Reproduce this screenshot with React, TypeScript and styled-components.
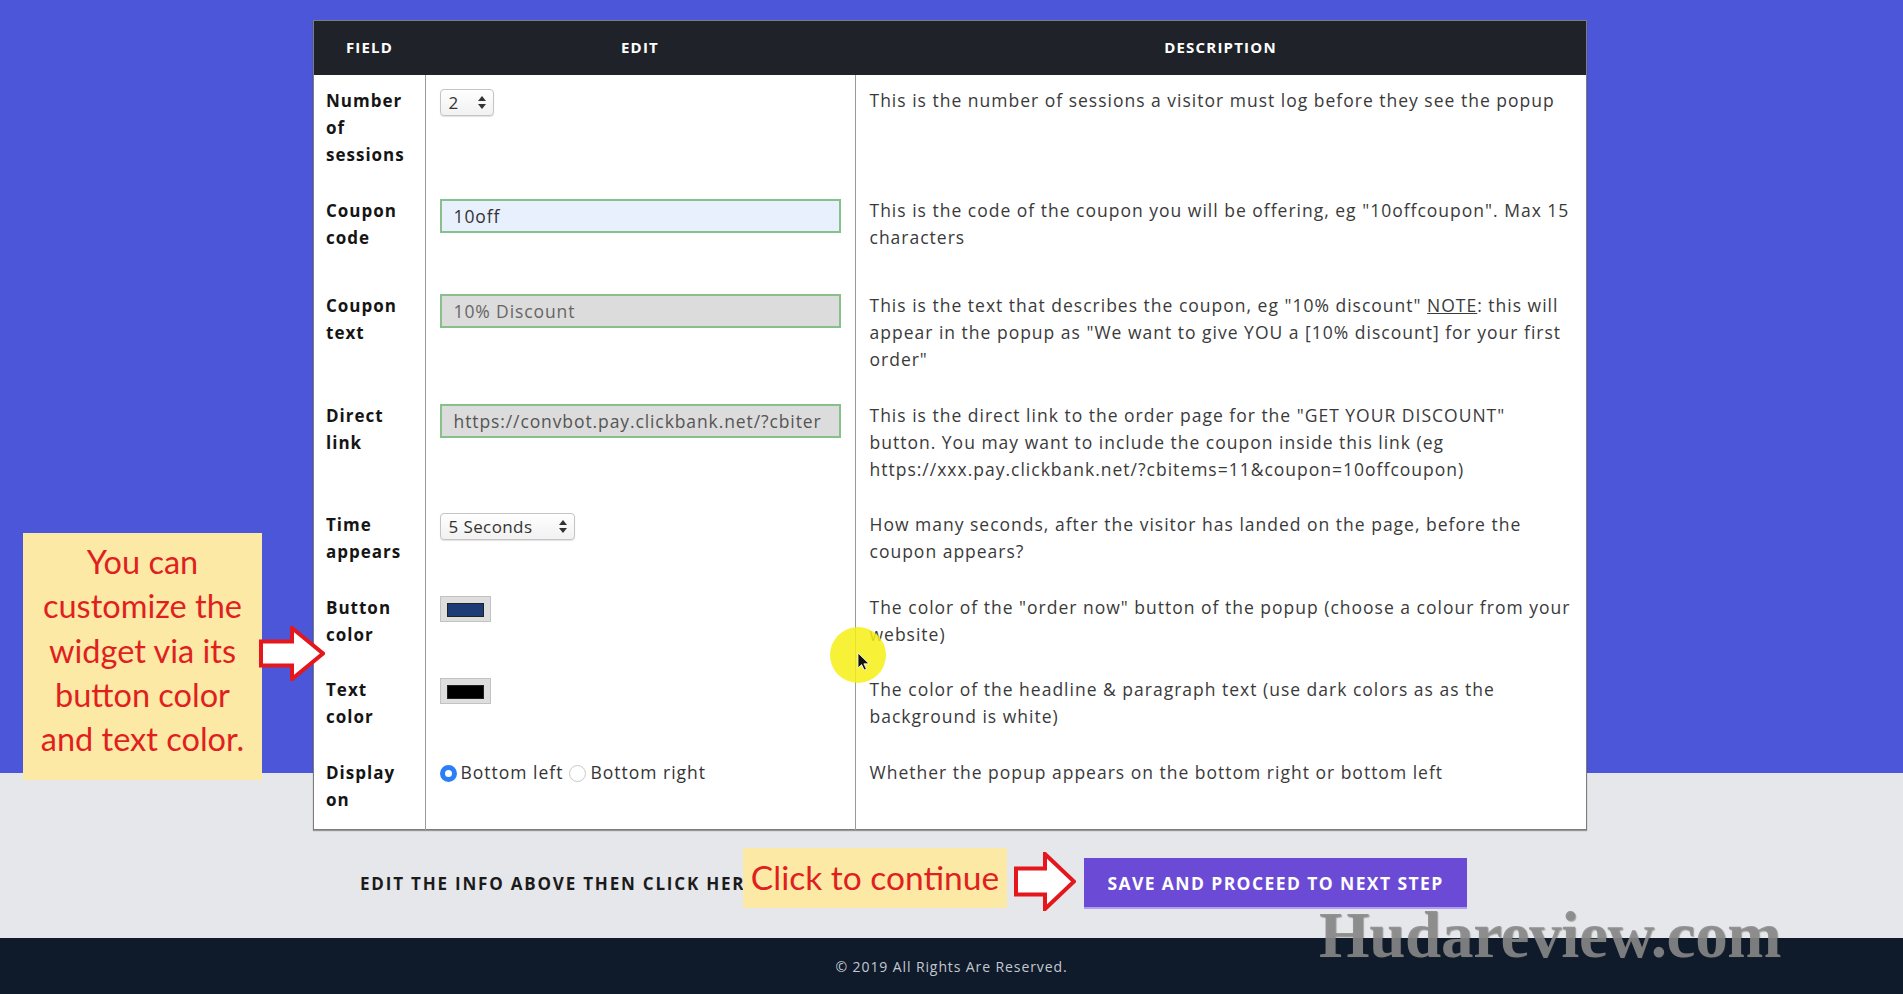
import React from "react";
import styled, { createGlobalStyle } from "styled-components";

const GlobalStyle = createGlobalStyle`
  html, body {
    margin: 0;
    padding: 0;
  }
  body {
    font-family: "Open Sans", "Liberation Sans", sans-serif;
    color: #333;
    background: #e6e7eb;
  }
`;

const Page = styled.div`
  position: relative;
  width: 1903px;
  min-height: 994px;
  overflow: hidden;
`;

const Main = styled.section`
  padding: 20px 0 0 313px;
  background: linear-gradient(to bottom, #4b57d8 0, #4b57d8 773px, #e6e7eb 773px);
`;

const Table = styled.table`
  width: 1272px;
  table-layout: fixed;
  border-collapse: collapse;
  background: #fff;
  border: 1px solid #7d7d7d;
  box-shadow: 0 1px 1px rgba(0, 0, 0, 0.35);
`;

const Head = styled.th<{ $w: number }>`
  width: ${(p) => p.$w}px;
  height: 52px;
  padding: 0 0 2px;
  background: #1f2329;
  color: #fff;
  font-size: 15px;
  font-weight: 700;
  letter-spacing: 1.2px;
  text-align: center;
  text-transform: uppercase;
`;

const Cell = styled.td`
  vertical-align: top;
  padding: 12px 14px 16.5px 14px;
  line-height: 27px;
  border-left: 1px solid #9a9a9a;
  &:first-child {
    border-left: none;
    padding: 12px 2px 16.5px 12px;
  }
`;

const Label = styled.span`
  display: block;
  font-size: 17px;
  font-weight: 700;
  letter-spacing: 1px;
  color: #151515;
  white-space: nowrap;
`;

const Desc = styled.span`
  display: block;
  font-size: 17.5px;
  letter-spacing: 1px;
  color: #3a3a3a;
  white-space: nowrap;
`;

const Note = styled.span`
  text-decoration: underline;
`;

const TextInput = styled.div<{ $bg: string; $fg: string }>`
  box-sizing: border-box;
  height: 34px;
  margin: 2px 0 31px;
  padding: 0 12px;
  border: 2px solid #86c08a;
  background: ${(p) => p.$bg};
  color: ${(p) => p.$fg};
  font-size: 17.5px;
  letter-spacing: 0.9px;
  line-height: 30px;
  white-space: nowrap;
  overflow: hidden;
`;

const Select = styled.div<{ $w: number }>`
  box-sizing: border-box;
  display: flex;
  align-items: center;
  justify-content: space-between;
  width: ${(p) => p.$w}px;
  height: 27px;
  margin-top: 2px;
  padding: 0 7px 0 8px;
  border: 1px solid #c4c4c4;
  border-radius: 4px;
  background: linear-gradient(#ffffff, #f1f1f1);
  box-shadow: 0 1px 1px rgba(0, 0, 0, 0.12);
  color: #333;
  font-size: 17px;
  letter-spacing: 0.4px;
`;

const Swatch = styled.div<{ $color: string }>`
  box-sizing: border-box;
  width: 51px;
  height: 26px;
  margin-top: 2px;
  padding: 6px;
  border: 1px solid #c2c2c2;
  background: #dedede;
  &::after {
    content: "";
    display: block;
    height: 12px;
    background: ${(p) => p.$color};
    border: 1px solid #222;
  }
`;

const RadioGroup = styled.div`
  display: flex;
  align-items: center;
  font-size: 17.5px;
  letter-spacing: 1px;
  color: #333;
`;

const Radio = styled.span<{ $on?: boolean }>`
  box-sizing: border-box;
  width: 17px;
  height: 17px;
  margin: 2px 4px 0 0;
  border-radius: 50%;
  background: #fff;
  border: ${(p) => (p.$on ? "5px solid #2b7ff6" : "1px solid #c8c8c8")};
  & + span {
    margin-right: 6px;
  }
`;

const ActionRow = styled.div`
  display: grid;
  grid-template-columns: 724px auto;
  align-items: center;
  margin: 28px 0 0 47px;
  padding-bottom: 29px;
`;

const ActionText = styled.div`
  font-size: 17px;
  font-weight: 700;
  letter-spacing: 1.8px;
  color: #1b1b1b;
  text-transform: uppercase;
  white-space: nowrap;
`;

const ProceedButton = styled.button`
  width: 383px;
  height: 51px;
  border: none;
  border-bottom: 2px solid #b39df0;
  background: #6b4bd6;
  color: #fff;
  font-family: inherit;
  font-size: 17.5px;
  font-weight: 700;
  letter-spacing: 1.4px;
  text-transform: uppercase;
`;

const Footer = styled.footer`
  display: flex;
  align-items: center;
  justify-content: center;
  height: 56px;
  background: #0f1b2b;
  color: #c3c8d0;
  font-size: 14px;
  letter-spacing: 0.9px;
`;

const Callout = styled.div<{ $x: number; $y: number; $w: number; $h: number }>`
  position: absolute;
  left: ${(p) => p.$x}px;
  top: ${(p) => p.$y}px;
  width: ${(p) => p.$w}px;
  height: ${(p) => p.$h}px;
  box-sizing: border-box;
  background: #fde9a6;
  color: #e01f1f;
  font-family: Lato, "Open Sans", sans-serif;
  font-size: 32.5px;
  line-height: 44.3px;
  text-align: center;
  white-space: nowrap;
`;

const CalloutBig = styled(Callout)`
  padding-top: 7px;
`;

const CalloutLine = styled(Callout)`
  display: flex;
  align-items: center;
  justify-content: center;
  padding-bottom: 2px;
  font-size: 33.5px;
`;

const ArrowMark = styled.svg<{ $x: number; $y: number }>`
  position: absolute;
  left: ${(p) => p.$x}px;
  top: ${(p) => p.$y}px;
`;

const Watermark = styled.div`
  position: absolute;
  left: 1319px;
  top: 903px;
  font-family: "Liberation Serif", "Times New Roman", serif;
  font-size: 65px;
  font-weight: 700;
  line-height: 1;
  letter-spacing: -0.3px;
  color: rgba(138, 138, 138, 0.88);
  text-shadow: 1px 1px 1px rgba(40, 40, 40, 0.35);
  pointer-events: none;
`;

const Halo = styled.div`
  position: absolute;
  left: 830px;
  top: 627px;
  width: 56px;
  height: 56px;
  border-radius: 50%;
  background: rgba(246, 240, 20, 0.85);
  filter: blur(0.6px);
`;

const Pointer = styled.svg`
  position: absolute;
  left: 857px;
  top: 652px;
`;

function Arrow({ x, y, w, h }: { x: number; y: number; w: number; h: number }) {
  const mid = h / 2;
  const shaft = h * 0.22;
  const neck = w * 0.5;
  return (
    <ArrowMark $x={x} $y={y} width={w} height={h} viewBox={`0 0 ${w} ${h}`}>
      <path
        d={`M2 ${mid - shaft} H${neck} V2 L${w - 2} ${mid} L${neck} ${h - 2} V${mid + shaft} H2 Z`}
        fill="#fff"
        stroke="#e3171c"
        strokeWidth="4"
        strokeLinejoin="miter"
      />
    </ArrowMark>
  );
}

function Spinner() {
  return (
    <svg width="8" height="13" viewBox="0 0 8 13">
      <path d="M4 0 L8 5 H0 Z" fill="#333" />
      <path d="M4 13 L8 8 H0 Z" fill="#333" />
    </svg>
  );
}

const rows: { label: string[]; edit: React.ReactNode; desc: React.ReactNode[] }[] = [
  {
    label: ["Number", "of", "sessions"],
    edit: (
      <Select $w={54}>
        <span>2</span>
        <Spinner />
      </Select>
    ),
    desc: ["This is the number of sessions a visitor must log before they see the popup"],
  },
  {
    label: ["Coupon", "code"],
    edit: (
      <TextInput $bg="#e8f0fe" $fg="#333">
        10off
      </TextInput>
    ),
    desc: [
      'This is the code of the coupon you will be offering, eg "10offcoupon". Max 15',
      "characters",
    ],
  },
  {
    label: ["Coupon", "text"],
    edit: (
      <TextInput $bg="#dcdcdc" $fg="#666">
        10% Discount
      </TextInput>
    ),
    desc: [
      <>
        This is the text that describes the coupon, eg "10% discount" <Note>NOTE</Note>: this will
      </>,
      'appear in the popup as "We want to give YOU a [10% discount] for your first',
      'order"',
    ],
  },
  {
    label: ["Direct", "link"],
    edit: (
      <TextInput $bg="#dcdcdc" $fg="#555">
        https://convbot.pay.clickbank.net/?cbiter
      </TextInput>
    ),
    desc: [
      'This is the direct link to the order page for the "GET YOUR DISCOUNT"',
      "button. You may want to include the coupon inside this link (eg",
      "https://xxx.pay.clickbank.net/?cbitems=11&coupon=10offcoupon)",
    ],
  },
  {
    label: ["Time", "appears"],
    edit: (
      <Select $w={135}>
        <span>5 Seconds</span>
        <Spinner />
      </Select>
    ),
    desc: [
      "How many seconds, after the visitor has landed on the page, before the",
      "coupon appears?",
    ],
  },
  {
    label: ["Button", "color"],
    edit: <Swatch $color="#1d3b75" />,
    desc: [
      'The color of the "order now" button of the popup (choose a colour from your',
      "website)",
    ],
  },
  {
    label: ["Text", "color"],
    edit: <Swatch $color="#000" />,
    desc: [
      "The color of the headline & paragraph text (use dark colors as as the",
      "background is white)",
    ],
  },
  {
    label: ["Display", "on"],
    edit: (
      <RadioGroup>
        <Radio $on />
        <span>Bottom left</span>
        <Radio />
        <span>Bottom right</span>
      </RadioGroup>
    ),
    desc: ["Whether the popup appears on the bottom right or bottom left"],
  },
];

export default function App() {
  return (
    <Page>
      <GlobalStyle />
      <Main>
        <Table>
          <thead>
            <tr>
              <Head $w={111}>Field</Head>
              <Head $w={430}>Edit</Head>
              <Head $w={731}>Description</Head>
            </tr>
          </thead>
          <tbody>
            {rows.map((row) => (
              <tr key={row.label.join(" ")}>
                <Cell>
                  {row.label.map((l) => (
                    <Label key={l}>{l}</Label>
                  ))}
                </Cell>
                <Cell>{row.edit}</Cell>
                <Cell>
                  {row.desc.map((d, i) => (
                    <Desc key={i}>{d}</Desc>
                  ))}
                </Cell>
              </tr>
            ))}
          </tbody>
        </Table>
        <ActionRow>
          <ActionText>Edit the info above then click here</ActionText>
          <ProceedButton>Save and proceed to next step</ProceedButton>
        </ActionRow>
      </Main>
      <Footer>© 2019 All Rights Are Reserved.</Footer>

      <CalloutBig $x={23} $y={533} $w={239} $h={247}>
        You can
        <br />
        customize the
        <br />
        widget via its
        <br />
        button color
        <br />
        and text color.
      </CalloutBig>
      <Arrow x={259} y={626} w={66} h={55} />

      <CalloutLine $x={743} $y={848} $w={264} $h={60}>
        Click to continue
      </CalloutLine>
      <Arrow x={1014} y={852} w={62} h={59} />

      <Halo />
      <Pointer width="13" height="19" viewBox="0 0 13 19">
        <path d="M1 1 V16 L4.6 12.6 L7.2 18 L9.4 17 L6.9 11.8 H12 Z" fill="#111" stroke="#fff" strokeWidth="0.8" />
      </Pointer>

      <Watermark>Hudareview.com</Watermark>
    </Page>
  );
}
